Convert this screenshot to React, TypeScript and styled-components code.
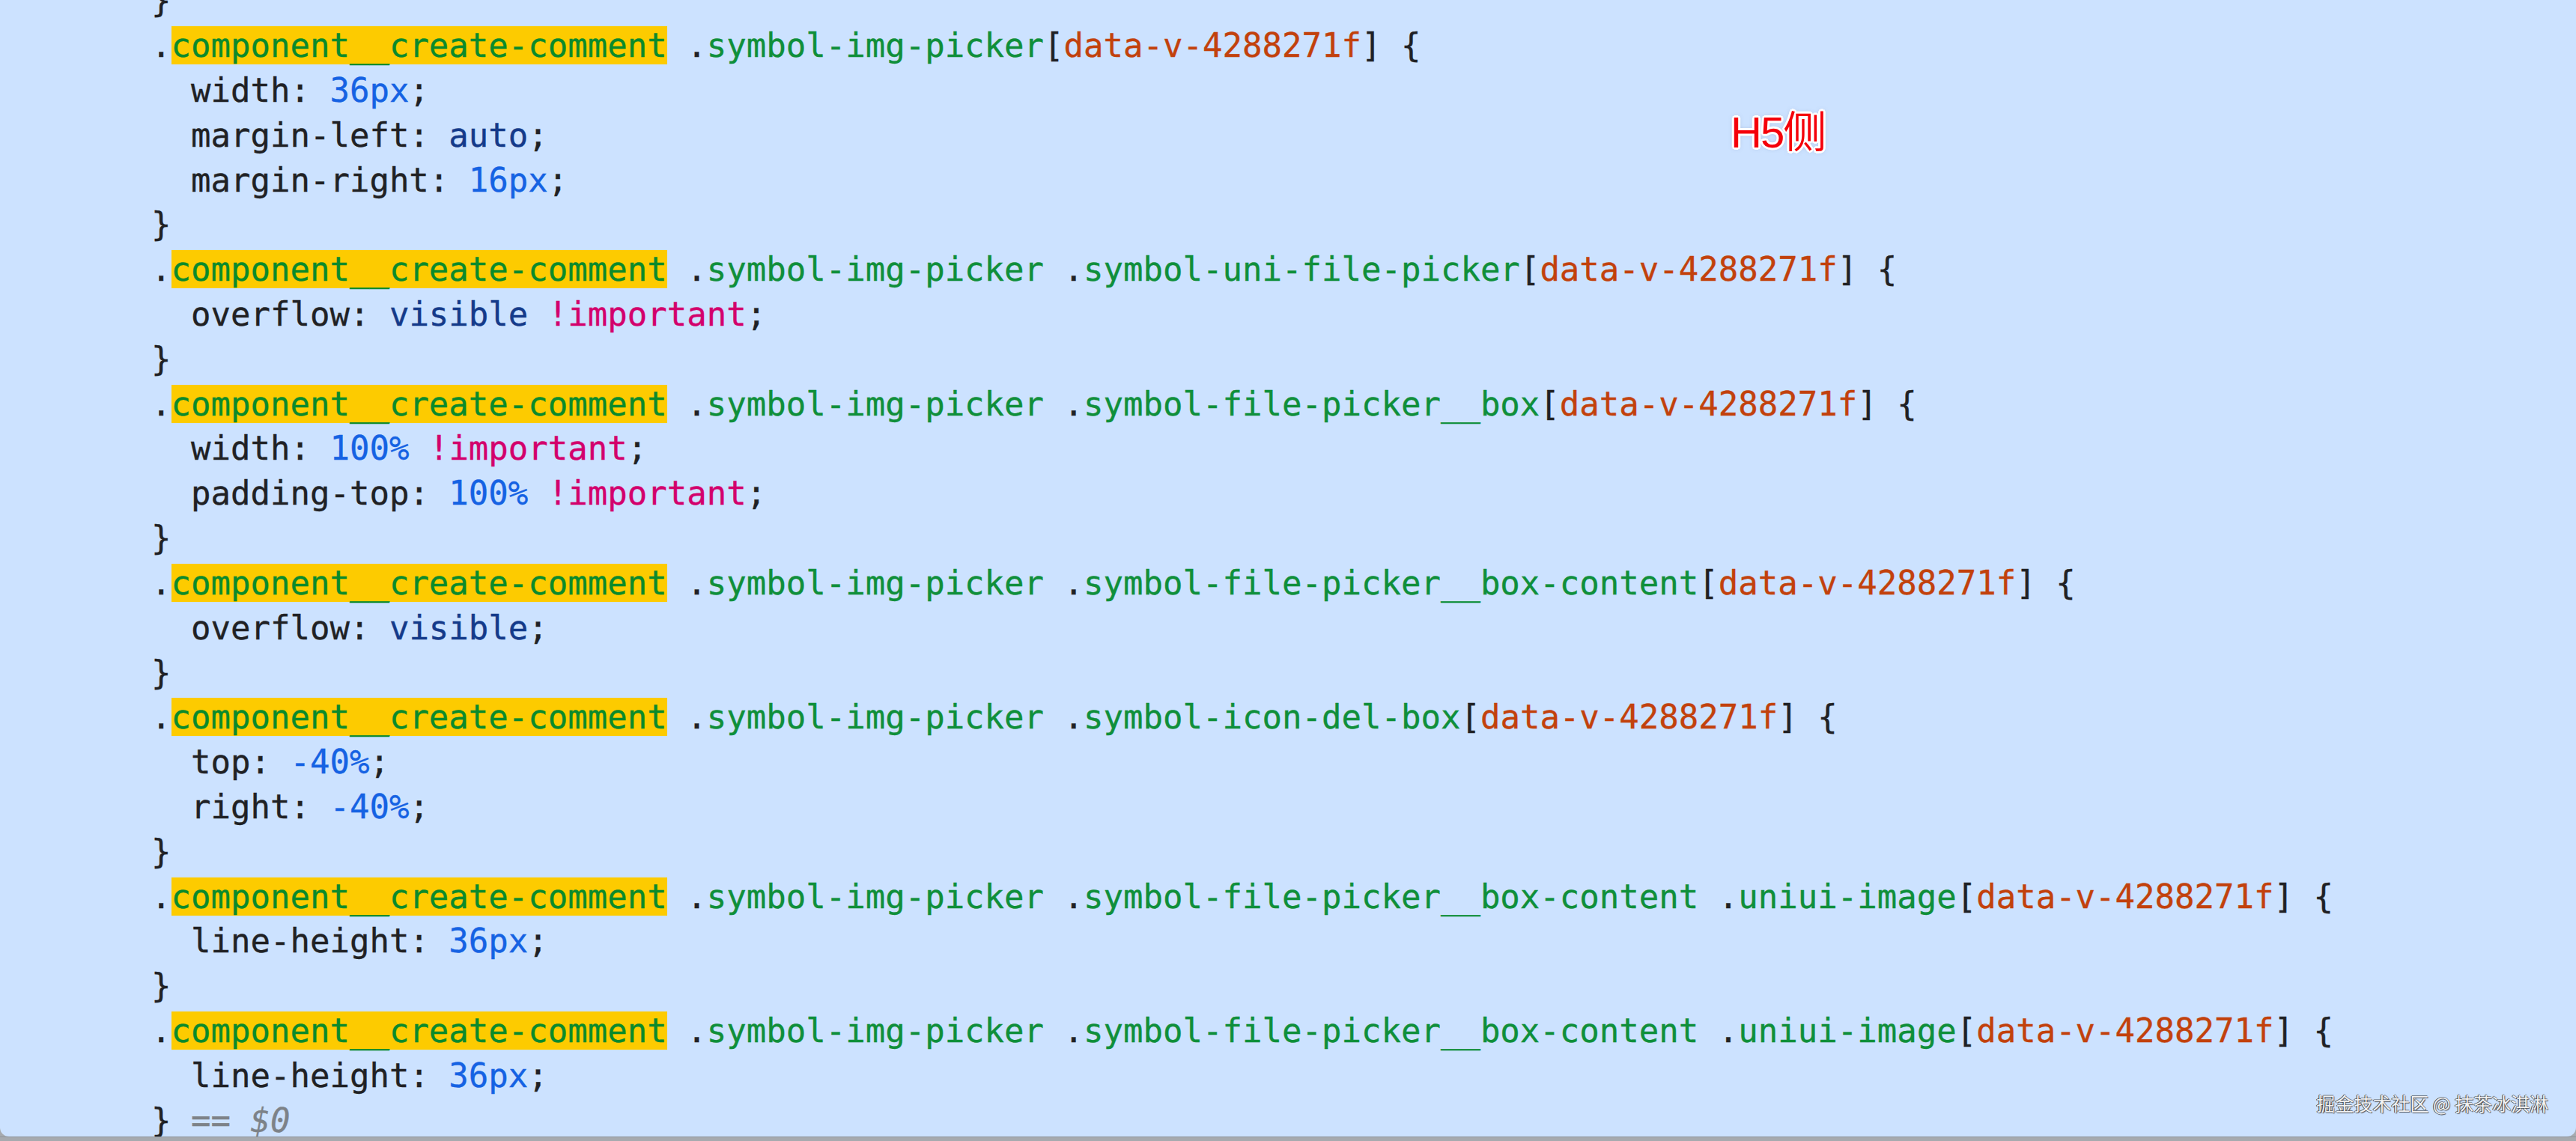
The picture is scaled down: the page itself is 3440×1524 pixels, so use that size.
import React from "react";
import styled, { createGlobalStyle, css } from "styled-components";

const GlobalStyle = createGlobalStyle`
  html, body {
    margin: 0;
    padding: 0;
    background: #a6aaaf;
  }
  body {
    width: 3440px;
    height: 1524px;
    overflow: hidden;
  }
`;

type Kind = "punc" | "match" | "sel" | "attr" | "prop" | "num" | "kw" | "imp" | "eq" | "ref";

const palette: Record<Kind, string> = {
  punc: "#202124",
  match: "#0a8a2c",
  sel: "#0f8f3a",
  attr: "#c2410c",
  prop: "#202124",
  num: "#1562e3",
  kw: "#143a8a",
  imp: "#d3006c",
  eq: "#7d8288",
  ref: "#7d8288",
};

const Page = styled.div`
  width: 3440px;
  height: 1524px;
  display: flex;
  flex-direction: column;
  overflow: hidden;
`;

const Panel = styled.main`
  position: relative;
  flex: 1;
  background: #cce2ff;
  border-radius: 0 0 12px 12px;
  overflow: hidden;
  padding-left: 202px;
`;

const Code = styled.div`
  margin-top: -28.7px;
  font-family: "DejaVu Sans Mono", "Liberation Mono", monospace;
  font-size: 44px;
  -webkit-text-stroke: 0.35px currentColor;
`;

const Line = styled.div`
  height: 59.82px;
  line-height: 59.82px;
  white-space: pre;
`;

const Token = styled.span<{ $kind: Kind }>`
  color: ${(p) => palette[p.$kind]};
  ${(p) =>
    p.$kind === "match" &&
    css`
      background: #fdcb00;
    `}
  ${(p) =>
    p.$kind === "ref" &&
    css`
      font-style: italic;
    `}
`;

const Label = styled.div`
  position: absolute;
  left: 2311px;
  top: 148px;
  font-family: "Liberation Sans", "Noto Sans CJK SC", sans-serif;
  font-size: 58px;
  line-height: 58px;
  letter-spacing: -2px;
  color: #f5000a;
  text-shadow:
    3px 0 0 #fff, -3px 0 0 #fff, 0 3px 0 #fff, 0 -3px 0 #fff,
    2px 2px 0 #fff, -2px 2px 0 #fff, 2px -2px 0 #fff, -2px -2px 0 #fff,
    0 0 6px rgba(90, 110, 140, 0.55);
`;

const Watermark = styled.div`
  position: absolute;
  right: 37px;
  top: 1461px;
  font-family: "Noto Sans CJK SC", sans-serif;
  font-size: 25px;
  line-height: 25px;
  color: #f2f2f2;
  text-shadow:
    -1px 0 0 rgba(30, 30, 30, 0.85),
    0 -1px 0 rgba(30, 30, 30, 0.5),
    1px 1px 1px rgba(30, 30, 30, 0.7);
  white-space: pre;
`;

const Strip = styled.footer`
  height: 6px;
  background: #a6aaaf;
  border-top: 1px solid #8f949a;
  box-sizing: border-box;
`;

type Tok = [Kind, string];

const selector = (parts: string[]): Tok[] => {
  const toks: Tok[] = [
    ["punc", "."],
    ["match", "component__create-comment"],
  ];
  parts.forEach((part) => {
    toks.push(["punc", " ."]);
    toks.push(["sel", part]);
  });
  toks.push(["punc", "["]);
  toks.push(["attr", "data-v-4288271f"]);
  toks.push(["punc", "]"]);
  toks.push(["punc", " {"]);
  return toks;
};

const decl = (name: string, values: Tok[]): Tok[] => [
  ["prop", "  " + name],
  ["punc", ": "],
  ...values,
  ["punc", ";"],
];

const close: Tok[] = [["punc", "}"]];

const lines: Tok[][] = [
  close,
  selector(["symbol-img-picker"]),
  decl("width", [["num", "36px"]]),
  decl("margin-left", [["kw", "auto"]]),
  decl("margin-right", [["num", "16px"]]),
  close,
  selector(["symbol-img-picker", "symbol-uni-file-picker"]),
  decl("overflow", [
    ["kw", "visible"],
    ["punc", " "],
    ["imp", "!important"],
  ]),
  close,
  selector(["symbol-img-picker", "symbol-file-picker__box"]),
  decl("width", [
    ["num", "100%"],
    ["punc", " "],
    ["imp", "!important"],
  ]),
  decl("padding-top", [
    ["num", "100%"],
    ["punc", " "],
    ["imp", "!important"],
  ]),
  close,
  selector(["symbol-img-picker", "symbol-file-picker__box-content"]),
  decl("overflow", [["kw", "visible"]]),
  close,
  selector(["symbol-img-picker", "symbol-icon-del-box"]),
  decl("top", [["num", "-40%"]]),
  decl("right", [["num", "-40%"]]),
  close,
  selector(["symbol-img-picker", "symbol-file-picker__box-content", "uniui-image"]),
  decl("line-height", [["num", "36px"]]),
  close,
  selector(["symbol-img-picker", "symbol-file-picker__box-content", "uniui-image"]),
  decl("line-height", [["num", "36px"]]),
  [
    ["punc", "} "],
    ["eq", "=="],
    ["punc", " "],
    ["ref", "$0"],
  ],
];

export default function App() {
  return (
    <>
      <GlobalStyle />
      <Page>
        <Panel>
          <Code>
            {lines.map((toks, i) => (
              <Line key={i}>
                {toks.map(([kind, text], j) => (
                  <Token key={j} $kind={kind}>
                    {text}
                  </Token>
                ))}
              </Line>
            ))}
          </Code>
          <Label>H5侧</Label>
          <Watermark>掘金技术社区 @ 抹茶冰淇淋</Watermark>
        </Panel>
        <Strip />
      </Page>
    </>
  );
}
